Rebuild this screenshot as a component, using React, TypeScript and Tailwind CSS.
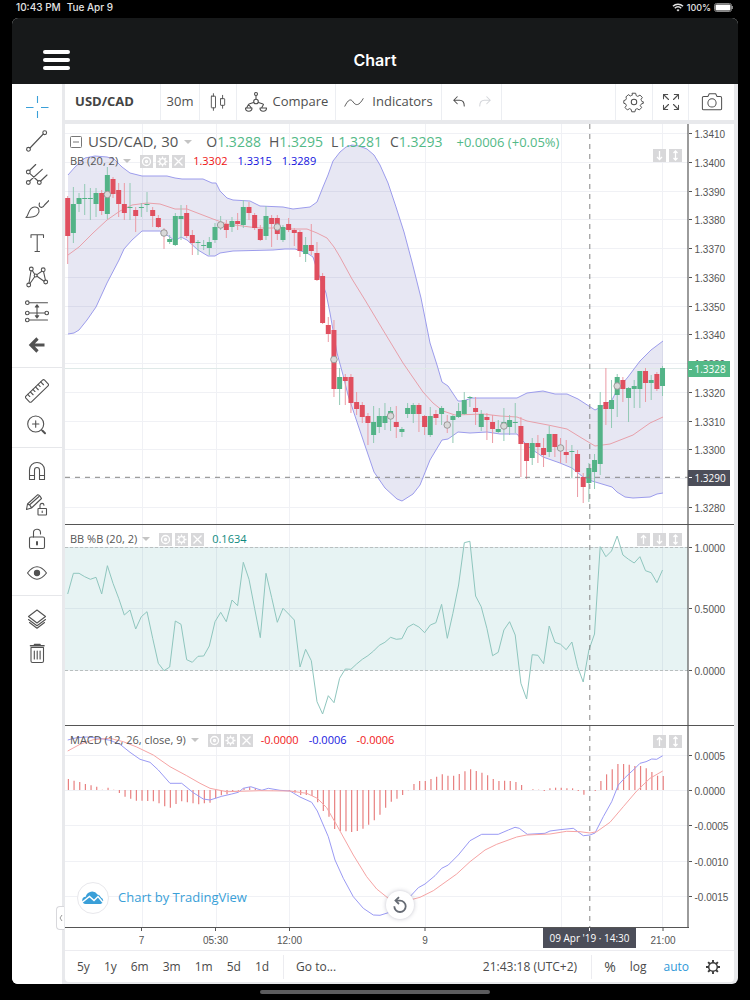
import React from "react";

/* ---------- chart data ---------- */

const FIRST_X = 67.7;
const STEP = 5.665;
const barX = (i: number) => FIRST_X + STEP * i;

type Candle = [number, number, number, number, "r" | "g"];

// wick top, body top, body bottom, wick bottom, colour
const candles: Candle[] = [
  [196, 198, 236, 264, "r"], [187, 204, 233, 243, "g"], [193, 198, 204, 212, "g"], [184, 198, 199, 215, "g"],
  [188, 198, 199, 220, "g"], [188, 193, 204, 217, "g"], [190, 193, 211, 215, "r"], [167, 175, 214, 219, "g"],
  [177, 179, 194, 198, "r"], [183, 190, 204, 217, "r"], [183, 204, 213, 220, "r"], [183, 207, 208, 220, "g"],
  [207, 210, 216, 232, "r"], [203, 207, 208, 217, "g"], [192, 204, 205, 212, "g"], [207, 210, 216, 227, "r"],
  [215, 218, 227, 228, "r"], [228, 230, 235, 249, "r"], [235, 239, 242, 244, "g"], [213, 216, 245, 246, "g"],
  [205, 216, 219, 240, "g"], [205, 213, 236, 238, "r"], [230, 235, 243, 255, "r"], [240, 242, 243, 255, "g"],
  [240, 245, 246, 250, "g"], [237, 242, 248, 255, "g"], [223, 227, 240, 243, "g"], [216, 223, 225, 230, "g"],
  [220, 224, 230, 238, "r"], [217, 221, 227, 232, "g"], [213, 221, 224, 230, "r"], [200, 207, 225, 228, "g"],
  [202, 207, 213, 220, "r"], [213, 215, 228, 230, "r"], [225, 229, 240, 241, "r"], [206, 216, 236, 240, "g"],
  [215, 218, 224, 247, "r"], [215, 218, 234, 240, "r"], [225, 227, 240, 242, "g"], [218, 224, 230, 232, "r"],
  [228, 230, 233, 246, "r"], [230, 232, 251, 257, "r"], [237, 245, 254, 262, "g"], [224, 245, 251, 255, "r"],
  [242, 253, 280, 281, "r"], [273, 276, 323, 324, "r"], [317, 325, 334, 342, "r"], [320, 330, 389, 397, "r"],
  [368, 377, 389, 405, "g"], [374, 377, 381, 405, "r"], [374, 377, 403, 413, "r"], [392, 402, 409, 415, "r"],
  [402, 405, 417, 423, "r"], [413, 416, 423, 445, "r"], [406, 422, 435, 443, "g"], [408, 416, 427, 433, "g"],
  [403, 416, 423, 430, "g"], [407, 411, 417, 431, "g"], [406, 422, 427, 438, "r"], [427, 429, 432, 437, "g"],
  [403, 408, 414, 418, "g"], [403, 405, 414, 423, "g"], [403, 405, 414, 432, "r"], [415, 416, 427, 435, "r"],
  [407, 416, 435, 437, "g"], [410, 414, 418, 425, "r"], [406, 408, 414, 425, "g"], [415, 422, 425, 433, "r"],
  [415, 416, 420, 443, "g"], [403, 411, 417, 418, "g"], [392, 400, 414, 415, "g"], [396, 397, 398, 407, "g"],
  [397, 408, 412, 425, "r"], [410, 414, 427, 431, "g"], [413, 417, 420, 440, "r"], [415, 422, 429, 443, "r"],
  [420, 429, 432, 433, "g"], [408, 422, 427, 441, "g"], [415, 420, 427, 435, "g"], [403, 422, 423, 433, "g"],
  [417, 426, 444, 477, "r"], [443, 443, 461, 479, "r"], [438, 443, 458, 465, "g"], [435, 443, 447, 463, "r"],
  [438, 448, 455, 467, "r"], [426, 434, 452, 457, "g"], [434, 434, 447, 457, "r"], [438, 447, 449, 463, "r"],
  [440, 452, 455, 463, "r"], [445, 451, 452, 478, "g"], [450, 454, 472, 497, "r"], [473, 477, 487, 503, "r"],
  [463, 468, 483, 502, "g"], [454, 460, 472, 489, "g"], [392, 405, 464, 475, "g"], [368, 402, 409, 425, "r"],
  [380, 400, 409, 428, "g"], [374, 377, 395, 417, "g"], [377, 380, 389, 402, "r"], [387, 388, 398, 422, "g"],
  [380, 386, 389, 408, "g"], [371, 371, 389, 408, "g"], [368, 371, 383, 402, "r"], [375, 380, 383, 400, "g"],
  [372, 374, 389, 391, "r"], [366, 368, 386, 396, "g"],
];

const upper =
  "68,175 75,167 85,158 95,156 107,157 114,159 122,167 130,173 142,176 167,176 175,178 182,179 203,179 212,183 216,183 220,191 227,198 233,200 250,201 260,206 283,207 293,209 310,207 317,202 323,187 328,175 333,161 340,152 346,147 352,145 359,146 367,149 374,155 380,165 388,183 396,207 404,232 412,262 421,298 430,343 437,365 442,382 448,386 458,401 463,401 472,398 517,398 527,393 543,391 555,394 567,394 578,399 595,410 601,407 612,400 617,390 628,377 640,361 651,350 663,341";
const middle =
  "68,255 79,247 93,233 107,220 120,211 132,205 147,203 160,204 175,209 187,209 200,214 213,219 227,224 250,227 260,228 277,228 293,229 307,229 317,233 327,238 334,247 340,257 352,279 365,300 383,330 403,363 423,392 433,403 443,411 455,415 483,414 500,416 517,417 527,421 548,425 567,429 580,437 595,446 610,444 633,435 650,423 663,417";
const lower =
  "68,334 74,333 79,330 87,320 96,307 107,283 119,260 124,249 132,240 142,231 160,231 170,237 175,241 181,237 187,240 198,250 208,256 215,256 220,253 233,251 273,250 285,249 295,249 307,253 313,257 318,273 326,293 330,313 337,353 343,375 348,395 358,425 374,472 385,488 397,499 402,501 413,494 420,485 430,460 442,440 448,439 458,432 470,433 487,432 500,434 517,434 522,440 530,448 543,457 560,463 572,468 583,477 592,481 612,487 617,492 625,497 633,498 650,497 657,494 663,493";

const markers: [number, number][] = [
  [7, 194.5], [17, 233], [27, 225], [37, 227], [47, 359.5], [57, 416], [67, 425], [77, 426], [87, 448], [97, 386],
];

// heights below the pane top, in thirds of a unit
const percentB = [
  222, 160, 160, 170, 178, 172, 222, 137, 190, 235, 285, 270, 327, 290, 275, 355, 430, 452, 441, 303, 313, 419, 427,
  409, 408, 378, 305, 277, 305, 240, 257, 127, 178, 265, 353, 160, 232, 307, 265, 282, 300, 441, 388, 422, 545, 582,
  527, 548, 475, 447, 448, 432, 418, 407, 393, 376, 367, 352, 358, 356, 322, 312, 321, 338, 315, 308, 253, 355, 280,
  195, 68, 64, 228, 260, 325, 407, 397, 330, 305, 345, 490, 537, 404, 406, 431, 318, 367, 373, 389, 366, 440, 486,
  390, 342, 80, 110, 93, 48, 105, 118, 129, 110, 152, 158, 188, 150,
];

const histogram = [
  162, 167, 171, 177, 181, 185, 194, 188, 194, 204, 215, 221, 227, 227, 228, 229, 235, 244, 248, 237, 229, 232, 235,
  238, 235, 233, 220, 211, 208, 201, 197, 190, 186, 190, 194, 195, 196, 195, 196, 198, 203, 210, 210, 213, 232, 258,
  275, 312, 318, 319, 321, 318, 311, 299, 286, 269, 248, 230, 221, 210, 196, 177, 168, 168, 162, 155, 148, 152, 152,
  147, 139, 133, 138, 143, 151, 162, 168, 167, 168, 171, 180, 195, 193, 194, 198, 190, 188, 188, 190, 190, 198, 209,
  196, 198, 168, 148, 133, 117, 117, 119, 123, 123, 130, 141, 152, 153,
];

const macdLine: [number, number][] = [
  [23, 45], [50, 38], [80, 36], [120, 40], [150, 46], [180, 58], [210, 82], [240, 103], [270, 112], [295, 135],
  [330, 175], [365, 175], [400, 203], [430, 222], [450, 225], [485, 214], [515, 207], [535, 202], [550, 190],
  [572, 185], [605, 196], [625, 190], [660, 196], [690, 198], [720, 216], [755, 232], [772, 258], [805, 335],
  [825, 405], [850, 460], [880, 515], [910, 550], [940, 570], [960, 571], [985, 563], [1020, 545], [1050, 515],
  [1075, 488], [1095, 477], [1125, 452], [1145, 430], [1165, 420], [1195, 390], [1230, 347], [1265, 328],
  [1315, 328], [1345, 315], [1365, 307], [1378, 310], [1402, 328], [1455, 325], [1470, 318], [1500, 314],
  [1540, 310], [1570, 332], [1590, 330], [1605, 324], [1630, 275], [1655, 230], [1675, 180], [1695, 158],
  [1725, 130], [1740, 115], [1758, 110], [1775, 102], [1790, 103], [1808, 92],
];

const signalLine: [number, number][] = [
  [23, 78], [60, 58], [100, 44], [150, 40], [190, 50], [230, 66], [280, 90], [330, 125], [380, 152], [420, 175],
  [450, 190], [500, 200], [600, 197], [690, 198], [740, 205], [772, 220], [800, 248], [830, 300], [880, 390],
  [920, 455], [950, 492], [985, 520], [1020, 532], [1050, 525], [1080, 517], [1120, 497], [1190, 447], [1230, 410],
  [1275, 375], [1310, 358], [1370, 336], [1400, 330], [1470, 327], [1520, 319], [1560, 320], [1590, 324],
  [1610, 320], [1650, 292], [1690, 245], [1730, 198], [1770, 160], [1808, 138],
];

const toPoints = (pts: [number, number][]) =>
  pts.map(([x, y]) => `${(60 + x / 3).toFixed(1)},${(725 + y / 3).toFixed(1)}`).join(" ");

const gridX = [142.5, 216.5, 289.5, 425.5, 561.5, 662.5];
const crossPrice = "1.3290";
const priceTicks = Array.from({ length: 14 }, (_, k) => ({
  y: Math.round(133 + k * 28.75) + 0.5,
  label: (1.341 - k * 0.001).toFixed(4),
}));
const percentTicks = [
  { y: 547.5, label: "1.0000" },
  { y: 608.5, label: "0.5000" },
  { y: 670.5, label: "0.0000" },
];
const macdTicks = [
  { y: 755.5, label: "0.0005" },
  { y: 790.5, label: "0.0000" },
  { y: 825.5, label: "-0.0005" },
  { y: 861.5, label: "-0.0010" },
  { y: 896.5, label: "-0.0015" },
];

/* ---------- shared chart parts ---------- */

type Tick = { y: number; label: string };

function Grid({ top, bottom, ticks }: { top: number; bottom: number; ticks: Tick[] }) {
  return (
    <g stroke="#f0f1f5">
      {gridX.map((x) => (
        <line key={x} x1={x} x2={x} y1={top} y2={bottom} />
      ))}
      {ticks.map((t) => (
        <line key={t.y} x1={65} x2={688} y1={t.y} y2={t.y} />
      ))}
    </g>
  );
}

function PriceScale({ top, bottom, ticks }: { top: number; bottom: number; ticks: Tick[] }) {
  return (
    <g>
      <rect x={688} y={top} width={46} height={bottom - top} fill="#fff" />
      <line x1={688} x2={688} y1={top} y2={bottom} stroke="#666" strokeWidth="1.3" />
      {ticks
        .filter((t) => t.label !== crossPrice)
        .map((t) => (
          <g key={t.y}>
            <line x1={689} x2={692} y1={t.y} y2={t.y} stroke="#555" />
            <text x={694.5} y={t.y + 4} fill="#555" className="text-[10px]">
              {t.label}
            </text>
          </g>
        ))}
    </g>
  );
}

function CrossLine({ top, bottom }: { top: number; bottom: number }) {
  return <line x1={589.8} x2={589.8} y1={top} y2={bottom} stroke="#858585" strokeDasharray="5 5" />;
}

const svgClass = "block w-full font-['Liberation_Sans',Arial,sans-serif]";

function LegendButtons({ kinds }: { kinds: string[] }) {
  const paths: Record<string, React.ReactNode> = {
    Hide: (
      <>
        <circle cx="6.5" cy="6.5" r="4" />
        <circle cx="6.5" cy="6.5" r="1" />
      </>
    ),
    Settings: (
      <>
        <circle cx="6.5" cy="6.5" r="2.8" />
        <path d="M6.500 1.500v2M6.500 9.500v2M1.500 6.500h2M9.500 6.500h2M3 3l1.300 1.300M8.700 8.700L10 10M10 3L8.700 4.300M4.300 8.700L3 10" />
      </>
    ),
    Remove: <path d="M2.500 2.500l8 8M10.500 2.500l-8 8" />,
    "Move up": <path d="M6.500 11V2.500M4 5l2.500-2.500L9 5" />,
    "Move down": <path d="M6.500 2v8.500M4 8l2.500 2.500L9 8" />,
    Maximize: <path d="M6.500 2v9M4.500 4l2-2 2 2M4.500 9l2 2 2-2" />,
  };
  return (
    <div className="flex gap-[3px]">
      {kinds.map((k) => (
        <button key={k} type="button" aria-label={k} className="size-[13px] bg-[#d8d8da]">
          <svg viewBox="0 0 13 13" className="block size-[13px]" fill="none" stroke="#fff" strokeWidth="1.3">
            {paths[k]}
          </svg>
        </button>
      ))}
    </div>
  );
}

function Caret() {
  return <span className="border-x-[4px] border-t-[4px] border-x-transparent border-t-[#c4c4c4]" />;
}

function IndicatorLegend({
  name,
  values,
}: {
  name: string;
  values: { text: string; color: string }[];
}) {
  return (
    <div className="flex h-4 items-center text-[11px] text-[#555]">
      <span>{name}</span>
      <span className="ml-[5px] flex">
        <Caret />
      </span>
      <div className="mr-2 ml-[9px] flex">
        <LegendButtons kinds={["Hide", "Settings", "Remove"]} />
      </div>
      <div className="flex gap-[10px]">
        {values.map((v, i) => (
          <span key={i} className={v.color}>
            {v.text}
          </span>
        ))}
      </div>
    </div>
  );
}

/* ---------- panes ---------- */

function PricePane() {
  const lowerReversed = lower.split(" ").reverse().join(" ");
  return (
    <section className="relative border-b border-[#555]">
      <svg viewBox="65 124 669 400" preserveAspectRatio="none" className={`${svgClass} h-[400px]`}>
        <Grid top={124} bottom={524} ticks={priceTicks} />
        <polygon points={`${upper} ${lowerReversed}`} fill="#000080" fillOpacity="0.095" />
        <line x1={65} x2={688} y1={368.5} y2={368.5} stroke="#dfe9e8" />
        <polyline points={upper} fill="none" stroke="#9c9cec" />
        <polyline points={lower} fill="none" stroke="#9c9cec" />
        <polyline points={middle} fill="none" stroke="#e8a0aa" />
        {candles.map(([high, top, bottom, low, c], i) => {
          const x = barX(i);
          return (
            <g key={i}>
              <line x1={x} x2={x} y1={high} y2={low} stroke={c === "r" ? "#eb9aa4" : "#92c9b4"} />
              <rect
                x={Math.max(65, x - 2.5)}
                y={top}
                width={5}
                height={bottom - top}
                fill={c === "r" ? "#e04f5f" : "#53b387"}
              />
            </g>
          );
        })}
        {markers.map(([i, y]) => (
          <circle key={i} cx={barX(i)} cy={y} r={3.3} fill="#d9d9d9" stroke="#9a9a9a" />
        ))}
        <line x1={65} x2={688} y1={477.3} y2={477.3} stroke="#858585" strokeDasharray="5 5" />
        <CrossLine top={124} bottom={524} />
        <PriceScale top={124} bottom={524} ticks={priceTicks} />
        <rect x={688} y={361} width={42} height={16} fill="#53b987" />
        <rect x={688} y={470} width={42} height={16} fill="#4c4e59" />
        <g fill="#fff" className="font-['Open_Sans',sans-serif] text-[10px]">
          <text x={694.5} y={372.5}>1.3328</text>
          <text x={694.5} y={481.5}>{crossPrice}</text>
        </g>
        <path d="M689 369.500h3M689 477.500h3" stroke="#fff" />
      </svg>
      <div className="absolute top-2 left-[5px] flex flex-col gap-px">
        <div className="flex h-5 items-center text-sm whitespace-nowrap text-[#555]">
          <button type="button" aria-label="Collapse legend">
            <svg viewBox="0 0 12 12" className="block size-3" fill="none" stroke="#777">
              <rect x=".5" y=".5" width="11" height="11" rx="1" />
              <path d="M3 6h6" />
            </svg>
          </button>
          <span className="ml-1.5 text-[15px]">USD/CAD, 30</span>
          <span className="ml-1.5 flex">
            <Caret />
          </span>
          <div className="ml-3.5 flex gap-2">
            {[
              ["O", "1.3288"],
              ["H", "1.3295"],
              ["L", "1.3281"],
              ["C", "1.3293"],
            ].map(([k, v]) => (
              <span key={k}>
                {k}
                <span className="text-[#53b987]">{v}</span>
              </span>
            ))}
          </div>
          <span className="ml-3.5 text-[13px] text-[#53b987]">+0.0006 (+0.05%)</span>
        </div>
        <IndicatorLegend
          name="BB (20, 2)"
          values={[
            { text: "1.3302", color: "text-[#ee1111]" },
            { text: "1.3315", color: "text-[#1111dd]" },
            { text: "1.3289", color: "text-[#1111dd]" },
          ]}
        />
      </div>
      <div className="absolute top-[25px] right-[52px]">
        <LegendButtons kinds={["Move down", "Maximize"]} />
      </div>
    </section>
  );
}

function PercentPane() {
  const points = percentB.map((v, i) => `${barX(i).toFixed(1)},${(520 + v / 3).toFixed(1)}`).join(" ");
  return (
    <section className="relative border-b border-[#555]">
      <svg viewBox="65 525 669 200" preserveAspectRatio="none" className={`${svgClass} h-[200px]`}>
        <Grid top={525} bottom={725} ticks={percentTicks} />
        <rect x={65} y={547} width={623} height={123} fill="#008080" fillOpacity="0.095" />
        <path d="M65 547.500H688M65 670.500H688" stroke="#b8bfbf" strokeDasharray="3 2" />
        <polyline points={points} fill="none" stroke="#8fc6be" />
        <CrossLine top={525} bottom={725} />
        <PriceScale top={525} bottom={725} ticks={percentTicks} />
      </svg>
      <div className="absolute top-1.5 left-[5px]">
        <IndicatorLegend name="BB %B (20, 2)" values={[{ text: "0.1634", color: "text-[#0e8a80]" }]} />
      </div>
      <div className="absolute top-2 right-[52px]">
        <LegendButtons kinds={["Move up", "Move down", "Maximize"]} />
      </div>
    </section>
  );
}

function MacdPane() {
  return (
    <section className="relative">
      <svg viewBox="65 726 669 202" preserveAspectRatio="none" className={`${svgClass} h-[202px]`}>
        <Grid top={726} bottom={928} ticks={macdTicks} />
        {histogram.map((v, i) => (
          <line
            key={i}
            x1={barX(i) + 0.7}
            x2={barX(i) + 0.7}
            y1={790}
            y2={725 + v / 3}
            stroke="#e88080"
            strokeWidth="1.2"
          />
        ))}
        <polyline points={toPoints(macdLine)} fill="none" stroke="#9a9af4" />
        <polyline points={toPoints(signalLine)} fill="none" stroke="#f6a4a4" />
        <CrossLine top={726} bottom={928} />
        <PriceScale top={726} bottom={928} ticks={macdTicks} />
        <line x1={65} x2={689} y1={927.5} y2={927.5} stroke="#555" />
      </svg>
      <div className="absolute top-1.5 left-[5px]">
        <IndicatorLegend
          name="MACD (12, 26, close, 9)"
          values={[
            { text: "-0.0000", color: "text-[#f01818]" },
            { text: "-0.0006", color: "text-[#1818e0]" },
            { text: "-0.0006", color: "text-[#f01818]" },
          ]}
        />
      </div>
      <div className="absolute top-[9px] right-[52px]">
        <LegendButtons kinds={["Move up", "Maximize"]} />
      </div>
      <a href="#tradingview" className="absolute bottom-3.5 left-3 flex items-center gap-[9px] text-[13px] text-[#3a9fd8]">
        <span className="flex size-8 items-center justify-center rounded-full border border-[#e8e8ec] bg-white">
          <svg viewBox="0 0 22 14" className="h-3.5 w-[22px]">
            <path
              d="M4 13a3.600 3.600 0 0 1-.300-7.200A6.500 6.500 0 0 1 15.500 3.500A5 5 0 0 1 19 6.500A3.400 3.400 0 0 1 18.500 13Z"
              fill="#3a9fd8"
            />
            <path d="M0 11.500L7.500 5.500L12 9.500L16 5.500L21 11.500" fill="none" stroke="#fff" strokeWidth="1.500" />
          </svg>
        </span>
        Chart by TradingView
      </a>
      <button
        type="button"
        aria-label="Reset chart"
        className="absolute bottom-[9px] left-[321px] flex size-7 items-center justify-center rounded-full bg-white shadow-[0_0_4px_rgba(60,60,90,0.3)]"
      >
        <svg viewBox="0 0 18 18" className="size-[18px]" fill="none" stroke="#666b74" strokeWidth="1.800">
          <path d="M5 4.600H9a5.700 5.700 0 1 1-5.700 5.700" />
          <path d="M8 1.200L4.500 4.600L8 8" />
        </svg>
      </button>
    </section>
  );
}

function TimeScale() {
  const labels: [number, string][] = [
    [141.5, "7"],
    [215.5, "05:30"],
    [289.5, "12:00"],
    [425, "9"],
    [663, "21:00"],
  ];
  return (
    <svg viewBox="65 928 669 22" preserveAspectRatio="none" className={`${svgClass} h-[22px]`}>
      {labels.map(([x, t]) => (
        <g key={t}>
          <line x1={x} x2={x} y1={928} y2={931} stroke="#555" />
          <text x={x} y={944} textAnchor="middle" fill="#555" className="text-[10px]">
            {t}
          </text>
        </g>
      ))}
      <rect x={543} y={928} width={93} height={20} fill="#4c4e59" />
      <line x1={589.5} x2={589.5} y1={928} y2={931} stroke="#fff" />
      <text
        x={589.5}
        y={941.5}
        textAnchor="middle"
        fill="#fff"
        className="font-['Open_Sans',sans-serif] text-[10px]"
      >
        09 Apr '19 · 14:30
      </text>
    </svg>
  );
}

/* ---------- icons ---------- */

function Icon({ children, className = "size-6" }: { children: React.ReactNode; className?: string }) {
  return (
    <svg
      viewBox="0 0 24 24"
      className={className}
      fill="none"
      stroke="currentColor"
      strokeWidth="1.1"
      strokeLinecap="round"
      strokeLinejoin="round"
    >
      {children}
    </svg>
  );
}

const toolGroups: { label: string; icon: React.ReactNode }[][] = [
  [
    {
      label: "Cross",
      icon: <path d="M12.500 1v7M12.500 16v7M1 12.500h7.500M16 12.500h7.500" stroke="#3a9fd8" strokeLinecap="butt" />,
    },
    {
      label: "Trend line",
      icon: (
        <>
          <circle cx="3.500" cy="20.300" r="1.900" />
          <circle cx="19.700" cy="3.700" r="1.900" />
          <path d="M5 19L18.300 5" />
        </>
      ),
    },
    {
      label: "Pitchfork",
      icon: (
        <>
          <circle cx="3.300" cy="9" r="1.900" />
          <circle cx="3.300" cy="19.500" r="1.900" />
          <circle cx="14.300" cy="19.500" r="1.900" />
          <path d="M4.600 7.500L10.700 1.500M4.700 18L17.300 6.300M15.700 18L22 12M4.700 10.400L13 18" />
        </>
      ),
    },
    {
      label: "Brush",
      icon: (
        <>
          <path d="M1 20.500C4.500 17.500 3 10.500 9.500 10C14 9.700 15.500 14 12.500 17.500C10.500 20 6 20.500 1 20.500Z" />
          <path d="M14.500 6C13 10.500 17.500 12 19.500 8L24 3.500" />
        </>
      ),
    },
    { label: "Text", icon: <path d="M6 6.500V3.800H18.500V6.500M12.200 3.800V20.500M10 20.500h4.500" /> },
    {
      label: "Pattern",
      icon: (
        <>
          <circle cx="6.300" cy="4" r="1.900" />
          <circle cx="18.200" cy="4.800" r="1.900" />
          <circle cx="10.700" cy="10.500" r="1.500" />
          <circle cx="3.700" cy="20" r="1.900" />
          <circle cx="20.700" cy="17" r="1.900" />
          <path d="M6 6L4 18M7.300 5.600L9.700 9.200M16.900 6.300L11.900 9.600M9.700 11.700L5 18.500M12 11.300L19 16.200M18.600 6.800L20.400 15" />
        </>
      ),
    },
    {
      label: "Position",
      icon: (
        <>
          <circle cx="2.300" cy="3.700" r="1.800" />
          <circle cx="2.300" cy="14" r="1.800" />
          <circle cx="2.300" cy="21" r="1.800" />
          <circle cx="21.700" cy="14" r="1.800" />
          <path d="M4.200 3.700H22.500M4.200 14H19.900M4.200 21H22.500M12 6v13M10.300 8L12 5.800L13.700 8ZM10.300 16.700L12 18.900L13.700 16.700Z" />
        </>
      ),
    },
    {
      label: "Back",
      icon: <path d="M19.500 12H6.500M12.500 5.500L6 12L12.500 18.500" strokeWidth="3.200" strokeLinecap="butt" strokeLinejoin="miter" />,
    },
  ],
  [
    {
      label: "Measure",
      icon: (
        <g transform="rotate(-44 12 12)">
          <rect x="-1" y="8" width="26" height="8" rx="1.500" />
          <path d="M3 8v3M6.600 8v4M10.200 8v3M13.800 8v4M17.400 8v3M21 8v4" />
        </g>
      ),
    },
    {
      label: "Zoom in",
      icon: (
        <>
          <circle cx="10.700" cy="11" r="8" />
          <path d="M7.500 11h6.400M10.700 7.800v6.400M16.500 16.800l1.500 1.500" />
          <path d="M17.500 17.800l2.500 2.500" strokeWidth="2" />
        </>
      ),
    },
  ],
  [
    {
      label: "Magnet",
      icon: (
        <path d="M4.500 20.500V11a7.500 7.500 0 0 1 15 0V20.500h-5V11a2.500 2.500 0 0 0-5 0V20.500ZM4.500 16.500h5M14.500 16.500h5" />
      ),
    },
    {
      label: "Lock drawing mode",
      icon: (
        <>
          <path d="M1.500 16.500L2.500 11L12.500 1.800Q14.500 1.500 16.500 5.500L6.500 15Z M5 11.500L14 3.500M2.500 11Q5.500 11.500 6.500 15" />
          <rect x="13" y="15.500" width="8.500" height="6.500" rx=".5" />
          <path d="M15 15.500v-3a2 2 0 0 1 4-.300M17.200 18v1.500" />
        </>
      ),
    },
    {
      label: "Lock all",
      icon: (
        <>
          <rect x="4.500" y="10" width="15" height="11.500" rx="1.500" />
          <path d="M8.500 10V6a3.500 3.500 0 0 1 7-.500V7" />
          <path d="M12 15v2.500" strokeWidth="2" />
        </>
      ),
    },
    {
      label: "Hide all",
      icon: (
        <>
          <path d="M2.500 12C6 7.500 9 5.800 12 5.800S18 7.500 21.500 12C18 16.500 15 18.200 12 18.200S6 16.500 2.500 12Z" />
          <circle cx="12" cy="12" r="2.600" fill="currentColor" />
        </>
      ),
    },
  ],
  [
    {
      label: "Object tree",
      icon: (
        <path d="M12 3L20.500 9.500L12 16L3.500 9.500ZM3.500 12.500L12 18.700L20.500 12.500M4.500 15.500L12 21.300L19.500 15.500" />
      ),
    },
    {
      label: "Remove drawings",
      icon: (
        <>
          <path d="M6 6.500h12.500V20a1.500 1.500 0 0 1-1.500 1.500h-9.500a1.500 1.500 0 0 1-1.500-1.500ZM9.300 10v8M12.200 10v8M15.100 10v8" />
          <path d="M5.500 4.800H19M9.500 3.500h5.500" strokeWidth="1.600" />
        </>
      ),
    },
  ],
];

function SideBar() {
  return (
    <nav aria-label="Drawing tools" className="relative w-[50px] shrink-0 bg-white">
      {toolGroups.map((group, gi) => (
        <div key={gi} className={`pt-1.5 pb-[5px] ${gi < 3 ? "border-b border-[#e6e7ea]" : ""}`}>
          {group.map((tool) => (
            <button
              key={tool.label}
              type="button"
              aria-label={tool.label}
              className="flex h-[34px] w-full items-center justify-center text-[#525252]"
            >
              <Icon>{tool.icon}</Icon>
            </button>
          ))}
        </div>
      ))}
      <button
        type="button"
        aria-label="Collapse panel"
        className="absolute -right-0.5 bottom-[54px] flex h-6 w-2 items-center justify-center rounded-l border border-r-0 border-[#d8d8dc] bg-white"
      >
        <svg viewBox="0 0 4 8" className="h-2 w-1" fill="none" stroke="#999">
          <path d="M3 1L1 4L3 7" />
        </svg>
      </button>
    </nav>
  );
}

function ToolBar() {
  const cell = "flex items-center justify-center border-r border-[#eceef2]";
  return (
    <div className="flex h-9 bg-white text-[13px] text-[#4f4f4f]">
      <button type="button" className={`${cell} w-24 pr-4 font-bold text-[#444]`}>USD/CAD</button>
      <button type="button" className={`${cell} w-[39px]`}>30m</button>
      <button type="button" aria-label="Candles" className={`${cell} w-[37px]`}>
        <Icon className="size-5">
          <rect x="4" y="5" width="5" height="14" rx=".5" />
          <path d="M6.500 2v3M6.500 19v3M17.500 4v4M17.500 16v3.500" />
          <rect x="15" y="8" width="5" height="8" rx=".5" />
        </Icon>
      </button>
      <button type="button" className={`${cell} w-[99px] gap-[5px]`}>
        <Icon>
          <circle cx="12" cy="4" r="1.500" />
          <path d="M12 5.500v3.500M9.500 12.500L5 14M14.500 12.500L19 14" />
          <circle cx="12" cy="11.500" r="2.300" />
          <path d="M4.500 14.500L2.500 18h5ZM19.500 14.500L17.500 18h5M1.500 18h6.500a3.200 3.200 0 0 1-6.500 0ZM16 18h6.500a3.200 3.200 0 0 1-6.500 0Z" />
        </Icon>
        Compare
      </button>
      <button type="button" className={`${cell} w-[106px] gap-2`}>
        <Icon className="size-5">
          <path d="M1 17C5 9 8 7.500 11 12S18 17 23 8" />
        </Icon>
        Indicators
      </button>
      <div className={`${cell} w-[60px] gap-3`}>
        <button type="button" aria-label="Undo">
          <Icon className="size-3.5">
            <path d="M9 3L3 9L9 15M3 9H13C18 9 21 12 21 19" strokeWidth="1.800" />
          </Icon>
        </button>
        <button type="button" aria-label="Redo" className="text-[#d4d6da]">
          <Icon className="size-3.5">
            <path d="M15 3L21 9L15 15M21 9H11C6 9 3 12 3 19" strokeWidth="1.800" />
          </Icon>
        </button>
      </div>
      <div className={`${cell} flex-1`} />
      <button type="button" aria-label="Settings" className={`${cell} w-[37px]`}>
        <Icon className="size-[22px]">
          <circle cx="12" cy="12" r="3" />
          <path d="M10.200 2.500h3.600l.7 2.800q.900.300 1.700.8l2.500-1.500 2.600 2.600-1.500 2.500q.500.800.8 1.700l.400.600 1.400.1v1.800l-1.400.3-1.200.8-.8 1.200 1.500 2.500-2.600 2.600-2.500-1.500q-.8.500-1.700.8l-.7 2.800h-3.600l-.7-2.800q-.9-.3-1.700-.8l-2.500 1.500-2.600-2.600 1.500-2.500q-.5-.8-.8-1.700l-2.100-.7v-3l2.100-.7q.3-.9.8-1.700L2.900 6.700l2.600-2.600 2.500 1.500q.8-.5 1.700-.8Z" transform="translate(.4 0) scale(.97)" />
        </Icon>
      </button>
      <button type="button" aria-label="Fullscreen" className={`${cell} w-9`}>
        <Icon className="size-5">
          <path
            d="M3 8V3h5M3 3l6 6M16 3h5v5M21 3l-6 6M3 16v5h5M3 21l6-6M16 21h5v-5M21 21l-6-6"
            strokeWidth="1.300"
          />
        </Icon>
      </button>
      <button type="button" aria-label="Snapshot" className="flex w-[45px] items-center justify-center">
        <Icon className="size-[22px]">
          <path d="M3 6h4.500L9 3h7l1.500 3H21a1.500 1.500 0 0 1 1.500 1.500V19a1.500 1.500 0 0 1-1.500 1.500H3A1.500 1.500 0 0 1 1.500 19V7.500A1.500 1.500 0 0 1 3 6Z" />
          <circle cx="12" cy="13" r="4.500" />
        </Icon>
      </button>
    </div>
  );
}

function BottomBar() {
  return (
    <div className="flex h-8 items-center justify-between rounded-b border-t border-[#ececf0] bg-white pr-[13px] pl-3 text-xs text-[#4a4a4a]">
      <div className="flex items-center">
        <div className="flex gap-3.5">
          {["5y", "1y", "6m", "3m", "1m", "5d", "1d"].map((r) => (
            <button key={r} type="button">{r}</button>
          ))}
        </div>
        <button type="button" className="ml-3.5 border-l border-[#ececf0] py-1 pl-3">Go to...</button>
      </div>
      <div className="flex items-center">
        <button type="button" className="border-r border-[#ececf0] py-1 pr-3.5">21:43:18 (UTC+2)</button>
        <button type="button" className="ml-3 text-sm">%</button>
        <button type="button" className="ml-3.5">log</button>
        <button type="button" className="ml-[17px] text-[#2f98d8]">auto</button>
        <button type="button" aria-label="Scale settings" className="ml-4">
          <svg viewBox="0 0 16 16" className="size-4" fill="none" stroke="#3c3c3c" strokeWidth="1.500">
            <circle cx="8" cy="8" r="4.300" />
            <path
              d="M8 1v2.700M8 12.300V15M1 8h2.700M12.300 8H15M3.100 3.100L5 5M11 11l1.900 1.900M12.900 3.100L11 5M5 11l-1.900 1.900"
              strokeWidth="1.900"
            />
          </svg>
        </button>
      </div>
    </div>
  );
}

export default function App() {
  return (
    <div className="min-h-screen bg-black font-['Open_Sans','Noto_Sans',sans-serif]">
      <div className="flex h-[18px] items-center justify-between px-4 pb-[3px] font-['Inter',sans-serif] text-[10px] font-medium text-[#e4e4e4]">
        <div className="flex gap-1.5">
          <span>10:43 PM</span>
          <span>Tue Apr 9</span>
        </div>
        <div className="flex items-center gap-[3px]">
          <svg viewBox="0 0 12 9" className="h-[9px] w-3" fill="none" stroke="#e4e4e4" strokeWidth="1.500">
            <path d="M1 3.300a7 7 0 0 1 10 0M2.800 5.200a4.500 4.500 0 0 1 6.400 0" />
            <path d="M6 8.500L4.500 7a2.200 2.200 0 0 1 3 0Z" fill="#e4e4e4" stroke="none" />
          </svg>
          <span className="text-[9px]">100%</span>
          <svg viewBox="0 0 20 9" className="h-[9px] w-5">
            <rect x=".5" y=".5" width="17" height="8" rx="2" fill="none" stroke="#888" />
            <rect x="1.500" y="1.500" width="15" height="6" rx="1" fill="#fff" />
            <path d="M18.500 3v3" stroke="#888" />
          </svg>
        </div>
      </div>

      <div className="mx-3 overflow-hidden rounded-md bg-[#e8e9ec]">
        <header className="grid h-[66px] grid-cols-[1fr_auto_1fr] items-center bg-[#17191a] px-[31px] pt-[18px] text-white">
          <button type="button" aria-label="Menu" className="flex w-[27px] flex-col gap-1">
            <span className="h-1 w-full rounded-full bg-white" />
            <span className="h-1 w-full rounded-full bg-white" />
            <span className="h-1 w-full rounded-full bg-white" />
          </button>
          <h1 className="font-['Inter',sans-serif] text-base font-semibold">Chart</h1>
        </header>

        <div className="flex gap-[3px] pr-1">
          <SideBar />
          <main className="min-w-0 flex-1 pb-0.5">
            <ToolBar />
            <div className="mt-1 bg-white">
              <PricePane />
              <PercentPane />
              <MacdPane />
              <TimeScale />
            </div>
            <BottomBar />
          </main>
        </div>
      </div>

      <div className="flex justify-center py-1.5">
        <span className="h-1 w-[230px] rounded-full bg-[#5c5c5e]" />
      </div>
    </div>
  );
}
